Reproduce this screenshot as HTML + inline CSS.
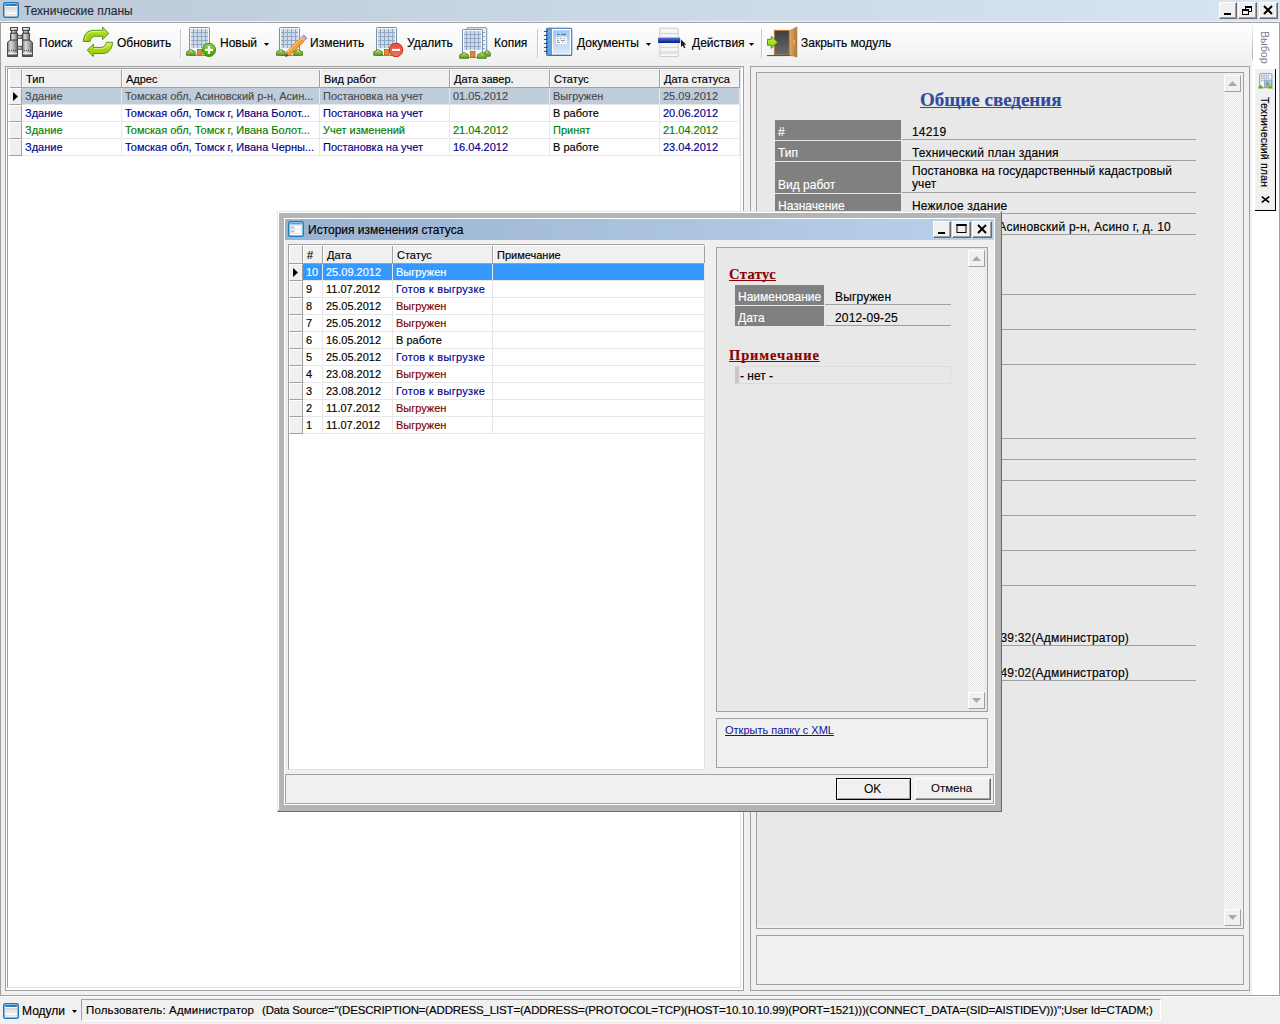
<!DOCTYPE html>
<html><head><meta charset="utf-8">
<style>
*{box-sizing:border-box;margin:0;padding:0}
html,body{width:1280px;height:1024px;overflow:hidden;background:#f0f0f0;font-family:"Liberation Sans",sans-serif;font-size:11px;color:#000}
.a{position:absolute}
.t{position:absolute;white-space:nowrap;line-height:1;-webkit-text-stroke-width:0.15px;text-decoration-skip-ink:none}
</style></head><body>
<div class="a" style="left:0px;top:0px;width:1280px;height:21px;background:linear-gradient(90deg,#bccad8,#cbd8e5 50%,#d7e5f2)"></div>
<div class="a" style="left:0px;top:21px;width:1280px;height:1px;background:#f0f0f0"></div>
<div class="a" style="left:0px;top:22px;width:1280px;height:1px;background:#a0a0a0"></div>
<div class="t" style="left:24px;top:5px;font-size:12px;color:#2a2a3a">Технические планы</div>
<svg class="a" style="left:3px;top:2px" width="16" height="16" viewBox="0 0 16 16">
<defs><linearGradient id="icg" x1="0" y1="0" x2="0" y2="1"><stop offset="0" stop-color="#d4d4d4"/><stop offset="1" stop-color="#f8f8f8"/></linearGradient></defs>
<rect x="0.75" y="0.75" width="14.5" height="14.5" rx="1.6" fill="#fff" stroke="#1878b8" stroke-width="1.5"/>
<rect x="2" y="2" width="12" height="2" fill="#2a8ad0"/><rect x="9" y="2.5" width="1" height="1" fill="#0a4a90"/><rect x="11" y="2.5" width="1" height="1" fill="#0a4a90"/><rect x="13" y="2.5" width="1" height="1" fill="#e03020"/>
<rect x="2" y="5" width="12" height="6.5" fill="url(#icg)"/>
<rect x="2" y="12.5" width="12" height="0.8" fill="#c8c8c8"/>
</svg>
<div class="a" style="left:1219px;top:2px;width:18px;height:17px;background:#f0f0f0;border-top:1px solid #fff;border-left:1px solid #fff;border-right:1px solid #6a6a6a;border-bottom:1px solid #6a6a6a;box-shadow:inset -1px -1px 0 #a0a0a0"></div>
<svg class="a" style="left:1219px;top:2px" width="18" height="17" viewBox="0 0 18 17"><rect x="5" y="11" width="7" height="2" fill="#000"/></svg>
<div class="a" style="left:1238px;top:2px;width:19px;height:17px;background:#f0f0f0;border-top:1px solid #fff;border-left:1px solid #fff;border-right:1px solid #6a6a6a;border-bottom:1px solid #6a6a6a;box-shadow:inset -1px -1px 0 #a0a0a0"></div>
<svg class="a" style="left:1238px;top:2px" width="19" height="17" viewBox="0 0 19 17"><rect x="7.5" y="4.5" width="6" height="5" fill="none" stroke="#000"/><rect x="7" y="4" width="7" height="2" fill="#000"/><rect x="4.5" y="7.5" width="6" height="5" fill="#f0f0f0" stroke="#000"/><rect x="4" y="7" width="7" height="2" fill="#000"/></svg>
<div class="a" style="left:1259px;top:2px;width:19px;height:17px;background:#f0f0f0;border-top:1px solid #fff;border-left:1px solid #fff;border-right:1px solid #6a6a6a;border-bottom:1px solid #6a6a6a;box-shadow:inset -1px -1px 0 #a0a0a0"></div>
<svg class="a" style="left:1259px;top:2px" width="19" height="17" viewBox="0 0 19 17"><path d="M5 4 L13 12 M13 4 L5 12" stroke="#000" stroke-width="2"/></svg>
<div class="a" style="left:0px;top:22px;width:1px;height:974px;background:#a0a0a0"></div>
<div class="a" style="left:1279px;top:22px;width:1px;height:974px;background:#a0a0a0"></div>
<div class="a" style="left:0px;top:995px;width:1280px;height:1px;background:#a0a0a0"></div>
<div class="a" style="left:0px;top:996px;width:1280px;height:1px;background:#fff"></div>
<div class="a" style="left:1px;top:23px;width:1251px;height:43px;background:linear-gradient(#fefefe,#f8f8f8 45%,#f0f0f0 95%)"></div>
<div class="a" style="left:1252px;top:23px;width:27px;height:972px;background:#fff"></div>
<div class="a" style="left:1252px;top:24px;width:1px;height:38px;background:linear-gradient(#f4f4f4,#b4b4b4 85%,#f0f0f0)"></div>
<svg class="a" style="left:4px;top:24px" width="32" height="36" viewBox="0 0 32 36">
<defs><linearGradient id="bg1" x1="0" x2="1"><stop offset="0" stop-color="#7a7a7a"/><stop offset="0.3" stop-color="#d8d8d8"/><stop offset="0.7" stop-color="#a4a4a4"/><stop offset="1" stop-color="#626262"/></linearGradient></defs>
<g fill="url(#bg1)" stroke="#4a4a4a" stroke-width="1">
<rect x="6.5" y="3.5" width="7" height="3"/><rect x="7.5" y="6.5" width="5" height="2.8"/><rect x="6.5" y="9.3" width="7" height="6.9"/>
<path d="M3.5 18.5L6 16.2H13.5V32.5H3.5Z"/>
<rect x="13.5" y="11.3" width="4.8" height="3"/><rect x="13.5" y="22.3" width="4.8" height="3"/>
<rect x="18.5" y="3.5" width="7" height="3"/><rect x="19.5" y="6.5" width="5" height="2.8"/><rect x="18.5" y="9.3" width="7" height="6.9"/>
<path d="M18.5 16.2H26L28.5 18.5V32.5H18.5Z"/>
</g>
<g fill="#555"><circle cx="5.4" cy="26.4" r="0.55"/><circle cx="7.5" cy="26.4" r="0.55"/><circle cx="9.5" cy="26.4" r="0.55"/><circle cx="11.5" cy="26.4" r="0.55"/>
<circle cx="20.4" cy="26.4" r="0.55"/><circle cx="22.5" cy="26.4" r="0.55"/><circle cx="24.5" cy="26.4" r="0.55"/><circle cx="26.6" cy="26.4" r="0.55"/></g>
<g fill="#f4f4f4"><rect x="4" y="28.8" width="9" height="1.3"/><rect x="19" y="28.8" width="9" height="1.3"/><rect x="7" y="4.3" width="6" height="1"/><rect x="19" y="4.3" width="6" height="1"/></g>
<g fill="#555"><rect x="4" y="30.6" width="9" height="1.6"/><rect x="19" y="30.6" width="9" height="1.6"/></g>
</svg>
<div class="t" style="left:39px;top:37px;font-size:12px;color:#000">Поиск</div>
<svg class="a" style="left:80px;top:24px" width="36" height="36" viewBox="0 0 36 36">
<defs><linearGradient id="gr1" x1="0" y1="0" x2="0" y2="1"><stop offset="0" stop-color="#d8f070"/><stop offset="0.5" stop-color="#a8d418"/><stop offset="1" stop-color="#98d000"/></linearGradient></defs>
<g fill="url(#gr1)" stroke="#3f9400" stroke-width="0.9" stroke-linejoin="round">
<path d="M3.3 17.5C3.8 10 8 6.3 13 6.3H22.6V3L28.8 9.4L22.6 15.6V12.3H15C12 12.3 10.6 14.5 10 17.5Z"/>
<path d="M32.6 18.3C32.1 25.8 28 29.5 23 29.5H13.4V32.6L7.2 26.2L13.4 20.1V23.4H21C24 23.4 25.6 21.3 26.4 18.3Z"/>
</g>
<g stroke="#eaffb0" stroke-width="0.8" fill="none" opacity="0.8"><path d="M5 16.5C5.5 11 9 7.6 13 7.6H22"/><path d="M14 24.6H21C24.5 24.6 26.5 22 27.2 19.4"/></g>
</svg>
<div class="t" style="left:117px;top:37px;font-size:12px;color:#000">Обновить</div>
<div class="a" style="left:180px;top:29px;width:1px;height:29px;background:#c8c8c8;box-shadow:1px 0 0 #fff"></div>
<svg width="0" height="0" style="position:absolute"><defs><linearGradient id="bushg" x1="0" y1="0" x2="0" y2="1"><stop offset="0" stop-color="#b8e070"/><stop offset="1" stop-color="#5e9a20"/></linearGradient><linearGradient id="grnc" x1="0" y1="0" x2="0" y2="1"><stop offset="0" stop-color="#8ad840"/><stop offset="1" stop-color="#3a9a00"/></linearGradient><linearGradient id="redc" x1="0" y1="0" x2="0" y2="1"><stop offset="0" stop-color="#e84a30"/><stop offset="1" stop-color="#f07060"/></linearGradient></defs></svg>
<svg class="a" style="left:184px;top:24px" width="36" height="36" viewBox="0 0 36 36"><rect x="5.5" y="3.5" width="20" height="28" rx="0.8" fill="#f2f7fc" stroke="#7890aa"/><rect x="7" y="5" width="17" height="19" fill="#cddcec"/><rect x="9" y="5" width="1" height="19" fill="#93a8c0"/><rect x="7" y="8" width="17" height="1" fill="#93a8c0"/><rect x="13" y="5" width="1" height="19" fill="#93a8c0"/><rect x="7" y="12" width="17" height="1" fill="#93a8c0"/><rect x="17" y="5" width="1" height="19" fill="#93a8c0"/><rect x="7" y="16" width="17" height="1" fill="#93a8c0"/><rect x="21" y="5" width="1" height="19" fill="#93a8c0"/><rect x="7" y="20" width="17" height="1" fill="#93a8c0"/><rect x="13.5" y="25.5" width="4.5" height="5.5" fill="#d89040" stroke="#c86a10" stroke-width="0.9"/><path transform="translate(2.1 25.1)" d="M0.5 6.2 V3.35 Q0.5 2.01 1.94 2.01 L2.716 2.01 Q3.201 0.4 4.85 0.4 Q6.499 0.4 6.983999999999999 2.01 L7.76 2.01 Q9.2 2.01 9.2 3.35 V6.2 Z" fill="url(#bushg)" stroke="#4a7c16" stroke-width="0.9"/><path transform="translate(2.1 25.1)" d="M3.88 1.34 Q4.85 0.67 5.819999999999999 1.34" stroke="#e0f4b0" stroke-width="0.8" fill="none"/><circle cx="25" cy="25.9" r="6.6" fill="url(#grnc)" stroke="#3a8a00" stroke-width="0.9"/><path d="M25 22V29.9M21.1 25.95H29" stroke="#fff" stroke-width="2.3"/></svg>
<div class="t" style="left:220px;top:37px;font-size:12px;color:#000">Новый</div>
<svg class="a" style="left:264px;top:43px" width="5" height="3" viewBox="0 0 5 3"><path d="M0 0H5L2.5 3Z" fill="#000"/></svg>
<svg class="a" style="left:272px;top:24px" width="36" height="36" viewBox="0 0 36 36"><rect x="7.5" y="3.5" width="20" height="28" rx="0.8" fill="#f2f7fc" stroke="#7890aa"/><rect x="9" y="5" width="17" height="19" fill="#cddcec"/><rect x="11" y="5" width="1" height="19" fill="#93a8c0"/><rect x="9" y="8" width="17" height="1" fill="#93a8c0"/><rect x="15" y="5" width="1" height="19" fill="#93a8c0"/><rect x="9" y="12" width="17" height="1" fill="#93a8c0"/><rect x="19" y="5" width="1" height="19" fill="#93a8c0"/><rect x="9" y="16" width="17" height="1" fill="#93a8c0"/><rect x="23" y="5" width="1" height="19" fill="#93a8c0"/><rect x="9" y="20" width="17" height="1" fill="#93a8c0"/><path transform="translate(4 25.1)" d="M0.5 6.2 V3.35 Q0.5 2.01 1.94 2.01 L2.716 2.01 Q3.201 0.4 4.85 0.4 Q6.499 0.4 6.983999999999999 2.01 L7.76 2.01 Q9.2 2.01 9.2 3.35 V6.2 Z" fill="url(#bushg)" stroke="#4a7c16" stroke-width="0.9"/><path transform="translate(4 25.1)" d="M3.88 1.34 Q4.85 0.67 5.819999999999999 1.34" stroke="#e0f4b0" stroke-width="0.8" fill="none"/><path transform="translate(21.3 25.1)" d="M0.5 6.2 V3.35 Q0.5 2.01 1.94 2.01 L2.716 2.01 Q3.201 0.4 4.85 0.4 Q6.499 0.4 6.983999999999999 2.01 L7.76 2.01 Q9.2 2.01 9.2 3.35 V6.2 Z" fill="url(#bushg)" stroke="#4a7c16" stroke-width="0.9"/><path transform="translate(21.3 25.1)" d="M3.88 1.34 Q4.85 0.67 5.819999999999999 1.34" stroke="#e0f4b0" stroke-width="0.8" fill="none"/><path d="M13.6 32.6 L15 27.5 L30 12.5 L33.4 15.9 L18.4 30.9 Z" fill="#f5a030" stroke="#b86a10" stroke-width="0.8"/><path d="M15.5 28 L30.5 13" stroke="#ffe0a0" stroke-width="1"/><path d="M30 12.5 L31.8 10.8 L35 14.2 L33.4 15.9Z" fill="#e890d0" stroke="#b060a0" stroke-width="0.6"/><path d="M28.6 13.9 L30 12.5 L33.4 15.9 L32 17.3Z" fill="#c8c8c8"/><path d="M13.6 32.6 L14.4 29.6 L16.6 31.8Z" fill="#404040"/></svg>
<div class="t" style="left:310px;top:37px;font-size:12px;color:#000">Изменить</div>
<svg class="a" style="left:370px;top:24px" width="36" height="36" viewBox="0 0 36 36"><rect x="6.5" y="3.5" width="20" height="28" rx="0.8" fill="#f2f7fc" stroke="#7890aa"/><rect x="8" y="5" width="17" height="19" fill="#cddcec"/><rect x="10" y="5" width="1" height="19" fill="#93a8c0"/><rect x="8" y="8" width="17" height="1" fill="#93a8c0"/><rect x="14" y="5" width="1" height="19" fill="#93a8c0"/><rect x="8" y="12" width="17" height="1" fill="#93a8c0"/><rect x="18" y="5" width="1" height="19" fill="#93a8c0"/><rect x="8" y="16" width="17" height="1" fill="#93a8c0"/><rect x="22" y="5" width="1" height="19" fill="#93a8c0"/><rect x="8" y="20" width="17" height="1" fill="#93a8c0"/><rect x="14.5" y="25.5" width="4.5" height="5.5" fill="#d89040" stroke="#c86a10" stroke-width="0.9"/><path transform="translate(3.2 25.1)" d="M0.5 6.2 V3.35 Q0.5 2.01 1.94 2.01 L2.716 2.01 Q3.201 0.4 4.85 0.4 Q6.499 0.4 6.983999999999999 2.01 L7.76 2.01 Q9.2 2.01 9.2 3.35 V6.2 Z" fill="url(#bushg)" stroke="#4a7c16" stroke-width="0.9"/><path transform="translate(3.2 25.1)" d="M3.88 1.34 Q4.85 0.67 5.819999999999999 1.34" stroke="#e0f4b0" stroke-width="0.8" fill="none"/><circle cx="26" cy="25.9" r="6.8" fill="url(#redc)" stroke="#c02a10" stroke-width="0.9"/><rect x="22" y="24.9" width="8" height="2.1" fill="#fff"/></svg>
<div class="t" style="left:407px;top:37px;font-size:12px;color:#000">Удалить</div>
<svg class="a" style="left:456px;top:24px" width="36" height="36" viewBox="0 0 36 36"><rect x="10.7" y="3.7" width="20" height="28" rx="0.8" fill="#e8f0f8" stroke="#7890aa"/><g fill="#93a8c0"><rect x="27" y="8" width="2" height="1"/><rect x="27" y="12" width="2" height="1"/><rect x="27" y="16" width="2" height="1"/><rect x="27" y="20" width="2" height="1"/><rect x="27" y="24" width="2" height="1"/></g><rect x="6.5" y="5.5" width="20" height="28" rx="0.8" fill="#f2f7fc" stroke="#7890aa"/><rect x="8" y="7" width="17" height="19" fill="#cddcec"/><rect x="10" y="7" width="1" height="19" fill="#93a8c0"/><rect x="8" y="10" width="17" height="1" fill="#93a8c0"/><rect x="14" y="7" width="1" height="19" fill="#93a8c0"/><rect x="8" y="14" width="17" height="1" fill="#93a8c0"/><rect x="18" y="7" width="1" height="19" fill="#93a8c0"/><rect x="8" y="18" width="17" height="1" fill="#93a8c0"/><rect x="22" y="7" width="1" height="19" fill="#93a8c0"/><rect x="8" y="22" width="17" height="1" fill="#93a8c0"/><rect x="14.5" y="27.5" width="4.5" height="5.5" fill="#d89040" stroke="#c86a10" stroke-width="0.9"/><path transform="translate(27.4 26)" d="M0.5 6.2 V3.35 Q0.5 2.01 1.4800000000000002 2.01 L2.0720000000000005 2.01 Q2.442 0.4 3.7 0.4 Q4.958 0.4 5.328 2.01 L5.920000000000001 2.01 Q6.9 2.01 6.9 3.35 V6.2 Z" fill="url(#bushg)" stroke="#4a7c16" stroke-width="0.9"/><path transform="translate(27.4 26)" d="M2.9600000000000004 1.34 Q3.7 0.67 4.44 1.34" stroke="#e0f4b0" stroke-width="0.8" fill="none"/><path transform="translate(3.2 28.1)" d="M0.5 6.2 V3.35 Q0.5 2.01 1.94 2.01 L2.716 2.01 Q3.201 0.4 4.85 0.4 Q6.499 0.4 6.983999999999999 2.01 L7.76 2.01 Q9.2 2.01 9.2 3.35 V6.2 Z" fill="url(#bushg)" stroke="#4a7c16" stroke-width="0.9"/><path transform="translate(3.2 28.1)" d="M3.88 1.34 Q4.85 0.67 5.819999999999999 1.34" stroke="#e0f4b0" stroke-width="0.8" fill="none"/><path transform="translate(21 28.1)" d="M0.5 6.2 V3.35 Q0.5 2.01 1.94 2.01 L2.716 2.01 Q3.201 0.4 4.85 0.4 Q6.499 0.4 6.983999999999999 2.01 L7.76 2.01 Q9.2 2.01 9.2 3.35 V6.2 Z" fill="url(#bushg)" stroke="#4a7c16" stroke-width="0.9"/><path transform="translate(21 28.1)" d="M3.88 1.34 Q4.85 0.67 5.819999999999999 1.34" stroke="#e0f4b0" stroke-width="0.8" fill="none"/></svg>
<div class="t" style="left:494px;top:37px;font-size:12px;color:#000">Копия</div>
<div class="a" style="left:537px;top:29px;width:1px;height:29px;background:#c8c8c8;box-shadow:1px 0 0 #fff"></div>
<svg class="a" style="left:540px;top:24px" width="36" height="36" viewBox="0 0 36 36">
<defs><linearGradient id="pgb" x1="0" y1="0" x2="0" y2="1"><stop offset="0" stop-color="#a6c6ea"/><stop offset="1" stop-color="#dae9f8"/></linearGradient></defs>
<rect x="6.5" y="4.2" width="25.3" height="27.3" rx="0.8" fill="#4a86c0" stroke="#3a72b0"/>
<rect x="7.5" y="5" width="3.6" height="26" fill="#5a9ad0"/>
<g stroke="#9ad0f8" stroke-width="0.8"><path d="M8 8.5L10 7.4M8 12.5L10 11.4M8 16.5L10 15.4M8 20.5L10 19.4M8 24.5L10 23.4M8 28.5L10 27.4"/></g>
<rect x="11.8" y="4.9" width="19.3" height="25.7" fill="#fff"/>
<rect x="13" y="6.2" width="16.9" height="23.5" fill="url(#pgb)"/>
<rect x="16" y="13" width="10.9" height="6.9" rx="0.8" fill="#fff"/>
<g stroke="#5a5a5a" stroke-width="0.7"><path d="M17 14.4H18.3M20 14.4H21.6M23.8 14.4H25.2M17 16.4H19M21 16.4H25.2M17 18.3H19.8M22 18.3H23.2M25 18.3H25.5"/></g>
<g stroke="#2a6ab0" stroke-width="0.9"><path d="M17 10.4H19.6M21 10.4H26"/></g>
<g stroke="#5a4030" stroke-width="1"><path d="M3.9 7.4H7.9M3.9 11.4H7.9M3.9 15.5H7.9M3.9 19.5H7.9M3.9 23.4H7.9M3.9 27.4H7.9"/></g>
</svg>
<div class="t" style="left:577px;top:37px;font-size:12px;color:#000">Документы</div>
<svg class="a" style="left:646px;top:43px" width="5" height="3" viewBox="0 0 5 3"><path d="M0 0H5L2.5 3Z" fill="#000"/></svg>
<svg class="a" style="left:654px;top:24px" width="36" height="36" viewBox="0 0 36 36">
<defs><linearGradient id="actb" x1="0" y1="0" x2="0" y2="1"><stop offset="0" stop-color="#5a7ad8"/><stop offset="1" stop-color="#001a88"/></linearGradient></defs>
<rect x="5.8" y="4.2" width="18.4" height="28.3" rx="0.6" fill="#f6f6f6" stroke="#c4c4c4" stroke-width="0.8"/>
<g stroke="#c8c8c8" stroke-width="0.8"><path d="M6 9.5H24M6 23.4H24"/></g>
<rect x="6" y="27" width="18" height="3" fill="#e2e2e2"/>
<rect x="4" y="13.5" width="22.2" height="5.5" rx="0.8" fill="url(#actb)"/>
<path d="M27 15.6V23L28.6 21.4L30.2 24.2L31.4 23.5L29.9 20.8H32.2Z" fill="#1a1a1a"/>
</svg>
<div class="t" style="left:692px;top:37px;font-size:12px;color:#000">Действия</div>
<svg class="a" style="left:749px;top:43px" width="5" height="3" viewBox="0 0 5 3"><path d="M0 0H5L2.5 3Z" fill="#000"/></svg>
<div class="a" style="left:761px;top:29px;width:1px;height:29px;background:#c8c8c8;box-shadow:1px 0 0 #fff"></div>
<svg class="a" style="left:762px;top:22px" width="38" height="38" viewBox="0 0 38 38">
<defs><linearGradient id="dr" x1="0" y1="0" x2="0" y2="1"><stop offset="0" stop-color="#3e3e3e"/><stop offset="1" stop-color="#6a6a6a"/></linearGradient>
<linearGradient id="leaf" x1="0" x2="1"><stop offset="0" stop-color="#e0aa68"/><stop offset="1" stop-color="#b07a38"/></linearGradient>
<linearGradient id="garr" x1="0" y1="0" x2="0" y2="1"><stop offset="0" stop-color="#c8f060"/><stop offset="1" stop-color="#88cc00"/></linearGradient></defs>
<rect x="12.3" y="8.3" width="15" height="24.7" fill="url(#dr)" stroke="#c08040" stroke-width="0.9"/>
<path d="M27.3 8.9L34.9 5V34.9L27.3 33Z" fill="url(#leaf)" stroke="#a06a28" stroke-width="0.6"/>
<rect x="31.2" y="18" width="1.6" height="4.6" fill="#f0b820"/>
<rect x="5" y="33" width="23.2" height="1.1" fill="#555"/>
<path d="M5.5 17.3H9.3V14.3L15.6 20.3L9.3 26.3V23.3H5.5Z" fill="url(#garr)" stroke="#3a9000" stroke-width="0.9" stroke-linejoin="round"/>
</svg>
<div class="t" style="left:801px;top:37px;font-size:12px;color:#000">Закрыть модуль</div>
<div class="a" style="left:5px;top:66px;width:739px;height:925px;border:1px solid #a0a0a0;background:#fff"></div>
<div class="a" style="left:6px;top:67px;width:737px;height:923px;border:1px solid #fff;border-top-color:#e6e6e6"></div>
<div class="a" style="left:7px;top:68px;width:734px;height:920px;border-left:1px solid #a0a0a0;border-top:1px solid #a0a0a0;border-right:1px solid #e3e3e3;border-bottom:1px solid #e3e3e3;background:#fff"></div>
<div class="a" style="left:8px;top:69px;width:732px;height:19px;background:#f0f0f0;border-top:1px solid #fff;border-bottom:1px solid #a0a0a0;box-shadow:inset 0 1px 0 #e6e6e6"></div>
<div class="a" style="left:8px;top:69px;width:2px;height:19px;background:#fff"></div>
<div class="a" style="left:21px;top:70px;width:1px;height:17px;background:#a0a0a0"></div>
<div class="a" style="left:22px;top:70px;width:1px;height:17px;background:#fff"></div>
<div class="a" style="left:121px;top:70px;width:1px;height:17px;background:#a0a0a0"></div>
<div class="a" style="left:122px;top:70px;width:1px;height:17px;background:#fff"></div>
<div class="a" style="left:319px;top:70px;width:1px;height:17px;background:#a0a0a0"></div>
<div class="a" style="left:320px;top:70px;width:1px;height:17px;background:#fff"></div>
<div class="a" style="left:449px;top:70px;width:1px;height:17px;background:#a0a0a0"></div>
<div class="a" style="left:450px;top:70px;width:1px;height:17px;background:#fff"></div>
<div class="a" style="left:549px;top:70px;width:1px;height:17px;background:#a0a0a0"></div>
<div class="a" style="left:550px;top:70px;width:1px;height:17px;background:#fff"></div>
<div class="a" style="left:659px;top:70px;width:1px;height:17px;background:#a0a0a0"></div>
<div class="a" style="left:660px;top:70px;width:1px;height:17px;background:#fff"></div>
<div class="a" style="left:739px;top:70px;width:1px;height:17px;background:#a0a0a0"></div>
<div class="t" style="left:26px;top:74px;font-size:11px;color:#000">Тип</div>
<div class="t" style="left:126px;top:74px;font-size:11px;color:#000">Адрес</div>
<div class="t" style="left:324px;top:74px;font-size:11px;color:#000">Вид работ</div>
<div class="t" style="left:454px;top:74px;font-size:11px;color:#000">Дата завер.</div>
<div class="t" style="left:554px;top:74px;font-size:11px;color:#000">Статус</div>
<div class="t" style="left:664px;top:74px;font-size:11px;color:#000">Дата статуса</div>
<div class="a" style="left:8px;top:88px;width:14px;height:17px;background:#f0f0f0;border-top:1px solid #fff;border-left:2px solid #fff;border-bottom:1px solid #a0a0a0;border-right:1px solid #a0a0a0"></div>
<div class="a" style="left:22px;top:88px;width:718px;height:16px;background:#bfcddb"></div>
<svg class="a" style="left:13px;top:92px" width="5" height="9" viewBox="0 0 5 9"><path d="M0 0L5 4.5L0 9Z" fill="#000"/></svg>
<div class="a" style="left:22px;top:104px;width:718px;height:1px;background:#e8e8e8"></div>
<div class="a" style="left:121px;top:88px;width:1px;height:17px;background:#e8e8e8"></div>
<div class="a" style="left:319px;top:88px;width:1px;height:17px;background:#e8e8e8"></div>
<div class="a" style="left:449px;top:88px;width:1px;height:17px;background:#e8e8e8"></div>
<div class="a" style="left:549px;top:88px;width:1px;height:17px;background:#e8e8e8"></div>
<div class="a" style="left:659px;top:88px;width:1px;height:17px;background:#e8e8e8"></div>
<div class="a" style="left:739px;top:88px;width:1px;height:17px;background:#e8e8e8"></div>
<div class="t" style="left:25px;top:91px;font-size:11px;color:#4a4a4a">Здание</div>
<div class="t" style="left:125px;top:91px;font-size:11px;color:#4a4a4a">Томская обл, Асиновский р-н, Асин...</div>
<div class="t" style="left:323px;top:91px;font-size:11px;color:#4a4a4a">Постановка на учет</div>
<div class="t" style="left:453px;top:91px;font-size:11px;color:#4a4a4a">01.05.2012</div>
<div class="t" style="left:553px;top:91px;font-size:11px;color:#4a4a4a">Выгружен</div>
<div class="t" style="left:663px;top:91px;font-size:11px;color:#4a4a4a">25.09.2012</div>
<div class="a" style="left:8px;top:105px;width:14px;height:17px;background:#f0f0f0;border-top:1px solid #fff;border-left:2px solid #fff;border-bottom:1px solid #a0a0a0;border-right:1px solid #a0a0a0"></div>
<div class="a" style="left:22px;top:121px;width:718px;height:1px;background:#e8e8e8"></div>
<div class="a" style="left:121px;top:105px;width:1px;height:17px;background:#e8e8e8"></div>
<div class="a" style="left:319px;top:105px;width:1px;height:17px;background:#e8e8e8"></div>
<div class="a" style="left:449px;top:105px;width:1px;height:17px;background:#e8e8e8"></div>
<div class="a" style="left:549px;top:105px;width:1px;height:17px;background:#e8e8e8"></div>
<div class="a" style="left:659px;top:105px;width:1px;height:17px;background:#e8e8e8"></div>
<div class="a" style="left:739px;top:105px;width:1px;height:17px;background:#e8e8e8"></div>
<div class="t" style="left:25px;top:108px;font-size:11px;color:#00008c">Здание</div>
<div class="t" style="left:125px;top:108px;font-size:11px;color:#00008c">Томская обл, Томск г, Ивана Болот...</div>
<div class="t" style="left:323px;top:108px;font-size:11px;color:#00008c">Постановка на учет</div>
<div class="t" style="left:453px;top:108px;font-size:11px;color:#00008c"></div>
<div class="t" style="left:553px;top:108px;font-size:11px;color:#000">В работе</div>
<div class="t" style="left:663px;top:108px;font-size:11px;color:#00008c">20.06.2012</div>
<div class="a" style="left:8px;top:122px;width:14px;height:17px;background:#f0f0f0;border-top:1px solid #fff;border-left:2px solid #fff;border-bottom:1px solid #a0a0a0;border-right:1px solid #a0a0a0"></div>
<div class="a" style="left:22px;top:138px;width:718px;height:1px;background:#e8e8e8"></div>
<div class="a" style="left:121px;top:122px;width:1px;height:17px;background:#e8e8e8"></div>
<div class="a" style="left:319px;top:122px;width:1px;height:17px;background:#e8e8e8"></div>
<div class="a" style="left:449px;top:122px;width:1px;height:17px;background:#e8e8e8"></div>
<div class="a" style="left:549px;top:122px;width:1px;height:17px;background:#e8e8e8"></div>
<div class="a" style="left:659px;top:122px;width:1px;height:17px;background:#e8e8e8"></div>
<div class="a" style="left:739px;top:122px;width:1px;height:17px;background:#e8e8e8"></div>
<div class="t" style="left:25px;top:125px;font-size:11px;color:#008000">Здание</div>
<div class="t" style="left:125px;top:125px;font-size:11px;color:#008000">Томская обл, Томск г, Ивана Болот...</div>
<div class="t" style="left:323px;top:125px;font-size:11px;color:#008000">Учет изменений</div>
<div class="t" style="left:453px;top:125px;font-size:11px;color:#008000">21.04.2012</div>
<div class="t" style="left:553px;top:125px;font-size:11px;color:#008000">Принят</div>
<div class="t" style="left:663px;top:125px;font-size:11px;color:#008000">21.04.2012</div>
<div class="a" style="left:8px;top:139px;width:14px;height:17px;background:#f0f0f0;border-top:1px solid #fff;border-left:2px solid #fff;border-bottom:1px solid #a0a0a0;border-right:1px solid #a0a0a0"></div>
<div class="a" style="left:22px;top:155px;width:718px;height:1px;background:#e8e8e8"></div>
<div class="a" style="left:121px;top:139px;width:1px;height:17px;background:#e8e8e8"></div>
<div class="a" style="left:319px;top:139px;width:1px;height:17px;background:#e8e8e8"></div>
<div class="a" style="left:449px;top:139px;width:1px;height:17px;background:#e8e8e8"></div>
<div class="a" style="left:549px;top:139px;width:1px;height:17px;background:#e8e8e8"></div>
<div class="a" style="left:659px;top:139px;width:1px;height:17px;background:#e8e8e8"></div>
<div class="a" style="left:739px;top:139px;width:1px;height:17px;background:#e8e8e8"></div>
<div class="t" style="left:25px;top:142px;font-size:11px;color:#00008c">Здание</div>
<div class="t" style="left:125px;top:142px;font-size:11px;color:#00008c">Томская обл, Томск г, Ивана Черны...</div>
<div class="t" style="left:323px;top:142px;font-size:11px;color:#00008c">Постановка на учет</div>
<div class="t" style="left:453px;top:142px;font-size:11px;color:#00008c">16.04.2012</div>
<div class="t" style="left:553px;top:142px;font-size:11px;color:#000">В работе</div>
<div class="t" style="left:663px;top:142px;font-size:11px;color:#00008c">23.04.2012</div>
<div class="a" style="left:750px;top:66px;width:500px;height:925px;border:1px solid #a0a0a0;background:#f0f0f0"></div>
<div class="a" style="left:756px;top:72px;width:488px;height:857px;border:1px solid #a0a0a0;background:#f0f0f0"></div>
<div class="a" style="left:757px;top:73px;width:467px;height:853px;background:#e8e8e8"></div>
<div class="a" style="left:1224px;top:92px;width:17px;height:817px;background-color:#f4f4f4;background-image:repeating-conic-gradient(#e6e6e6 0 25%,#fafafa 0 50%);background-size:2px 2px"></div>
<div class="a" style="left:1224px;top:75px;width:17px;height:17px;background:#f0f0f0;border-top:1px solid #fff;border-left:1px solid #fff;border-right:1px solid #a0a0a0;border-bottom:1px solid #a0a0a0"></div>
<svg class="a" style="left:1228px;top:81px" width="9" height="5" viewBox="0 0 9 5"><path d="M0 5L4.5 0L9 5Z" fill="#a8a8a8"/></svg>
<div class="a" style="left:1224px;top:909px;width:17px;height:17px;background:#f0f0f0;border-top:1px solid #fff;border-left:1px solid #fff;border-right:1px solid #a0a0a0;border-bottom:1px solid #a0a0a0"></div>
<svg class="a" style="left:1228px;top:915px" width="9" height="5" viewBox="0 0 9 5"><path d="M0 0L9 0L4.5 5Z" fill="#a8a8a8"/></svg>
<div class="a" style="left:756px;top:935px;width:488px;height:50px;border:1px solid #a0a0a0;background:#f0f0f0"></div>
<div class="t" style="left:920px;top:90px;font-size:19px;font-weight:bold;color:#2d4a9e;text-decoration:underline;font-family:Liberation Serif,serif">Общие сведения</div>
<div class="a" style="left:775px;top:120px;width:126px;height:20px;background:#808080"></div>
<div class="t" style="left:778px;top:126px;font-size:12px;color:#fff">#</div>
<div class="a" style="left:902px;top:139px;width:294px;height:1px;background:#a0a0a0"></div>
<div class="t" style="left:912px;top:126px;font-size:12px;letter-spacing:0.2px">14219</div>
<div class="a" style="left:775px;top:141px;width:126px;height:20px;background:#808080"></div>
<div class="t" style="left:778px;top:147px;font-size:12px;color:#fff">Тип</div>
<div class="a" style="left:902px;top:160px;width:294px;height:1px;background:#a0a0a0"></div>
<div class="t" style="left:912px;top:147px;font-size:12px;letter-spacing:0.2px">Технический план здания</div>
<div class="a" style="left:775px;top:162px;width:126px;height:31px;background:#808080"></div>
<div class="t" style="left:778px;top:179px;font-size:12px;color:#fff">Вид работ</div>
<div class="a" style="left:902px;top:192px;width:294px;height:1px;background:#a0a0a0"></div>
<div class="t" style="left:912px;top:165px;font-size:12px;line-height:13px;letter-spacing:0.08px">Постановка на государственный кадастровый<br>учет</div>
<div class="a" style="left:775px;top:194px;width:126px;height:20px;background:#808080"></div>
<div class="t" style="left:778px;top:200px;font-size:12px;color:#fff">Назначение</div>
<div class="a" style="left:902px;top:213px;width:294px;height:1px;background:#a0a0a0"></div>
<div class="t" style="left:912px;top:200px;font-size:12px;letter-spacing:0.2px">Нежилое здание</div>
<div class="a" style="left:775px;top:215px;width:126px;height:20px;background:#808080"></div>
<div class="t" style="left:778px;top:221px;font-size:12px;color:#fff">Адрес</div>
<div class="a" style="left:902px;top:234px;width:294px;height:1px;background:#a0a0a0"></div>
<div class="t" style="left:912px;top:221px;font-size:12px;letter-spacing:0.2px"></div>
<div class="a" style="left:775px;top:294px;width:421px;height:1px;background:#a0a0a0"></div>
<div class="a" style="left:775px;top:329px;width:421px;height:1px;background:#a0a0a0"></div>
<div class="a" style="left:775px;top:364px;width:421px;height:1px;background:#a0a0a0"></div>
<div class="a" style="left:775px;top:438px;width:421px;height:1px;background:#a0a0a0"></div>
<div class="a" style="left:775px;top:459px;width:421px;height:1px;background:#a0a0a0"></div>
<div class="a" style="left:775px;top:480px;width:421px;height:1px;background:#a0a0a0"></div>
<div class="a" style="left:775px;top:515px;width:421px;height:1px;background:#a0a0a0"></div>
<div class="a" style="left:775px;top:550px;width:421px;height:1px;background:#a0a0a0"></div>
<div class="a" style="left:775px;top:585px;width:421px;height:1px;background:#a0a0a0"></div>
<div class="a" style="left:775px;top:645px;width:421px;height:1px;background:#a0a0a0"></div>
<div class="a" style="left:775px;top:680px;width:421px;height:1px;background:#a0a0a0"></div>
<div class="t" style="left:700px;top:632px;font-size:12px;width:429px;text-align:right;letter-spacing:0.2px">25.09.2012 14:39:32(Администратор)</div>
<div class="t" style="left:700px;top:667px;font-size:12px;width:429px;text-align:right;letter-spacing:0.2px">25.09.2012 14:49:02(Администратор)</div>
<div class="t" style="left:700px;top:221px;font-size:12px;width:471px;text-align:right;letter-spacing:0.22px">Томская обл, Асиновский р-н, Асино г, д. 10</div>
<svg class="a" style="left:3px;top:1003px" width="16" height="16" viewBox="0 0 16 16">
<rect x="0.75" y="0.75" width="14.5" height="14.5" rx="1.6" fill="#fff" stroke="#1878b8" stroke-width="1.5"/>
<rect x="2" y="2" width="12" height="2" fill="#2a8ad0"/><rect x="9" y="2.5" width="1" height="1" fill="#0a4a90"/><rect x="11" y="2.5" width="1" height="1" fill="#0a4a90"/><rect x="13" y="2.5" width="1" height="1" fill="#e03020"/>
<rect x="2" y="5" width="12" height="6.5" fill="url(#icg)"/>
<rect x="2" y="12.5" width="12" height="0.8" fill="#c8c8c8"/>
</svg>
<div class="t" style="left:22px;top:1005px;font-size:12px">Модули</div>
<svg class="a" style="left:72px;top:1010px" width="5" height="3" viewBox="0 0 5 3"><path d="M0 0H5L2.5 3Z" fill="#000"/></svg>
<div class="a" style="left:81px;top:999px;width:1080px;height:22px;border-left:1px solid #a0a0a0;border-top:1px solid #a0a0a0;border-right:1px solid #fff;border-bottom:1px solid #fff"></div>
<div class="t" style="left:86px;top:1005px;font-size:11.5px;letter-spacing:0.15px">Пользователь: Администратор</div>
<div class="t" style="left:262px;top:1005px;font-size:11.5px;letter-spacing:-0.16px">(Data Source="(DESCRIPTION=(ADDRESS_LIST=(ADDRESS=(PROTOCOL=TCP)(HOST=10.10.10.99)(PORT=1521)))(CONNECT_DATA=(SID=AISTIDEV)))";User Id=CTADM;)</div>
<div class="t" style="left:1259px;top:31px;font-size:10.6px;color:#7a7a8a;writing-mode:vertical-rl;-webkit-text-stroke-width:0">Выбор</div>
<div class="a" style="left:1255px;top:69px;width:21px;height:142px;background:#f0f0f0;border-right:1px solid #000;border-bottom:1px solid #000"></div>
<svg class="a" style="left:1257px;top:72px" width="18" height="18" viewBox="0 0 18 18">
<rect x="2.7" y="1.7" width="12.2" height="14" rx="1" fill="#f4f8fc" stroke="#7a9ac0"/>
<g fill="#a0b4cc"><rect x="4" y="3" width="1.6" height="1.6"/><rect x="6.2" y="3" width="1.6" height="1.6"/><rect x="8.4" y="3" width="1.6" height="1.6"/><rect x="10.6" y="3" width="1.6" height="1.6"/>
<rect x="4" y="5.3" width="1.6" height="1.6"/><rect x="6.2" y="5.3" width="1.6" height="1.6"/><rect x="8.4" y="5.3" width="1.6" height="1.6"/><rect x="10.6" y="5.3" width="1.6" height="1.6"/>
<rect x="4" y="7.6" width="1.6" height="1.6"/><rect x="6.2" y="7.6" width="1.6" height="1.6"/></g>
<rect x="7.3" y="8" width="7.2" height="7.2" fill="#9ccaf0" stroke="#6a9ac8" stroke-width="0.6"/>
<path d="M8.5 14.6L10 8.8L13.8 14.6Z" fill="#8ac040"/><path d="M10 8.8L11.2 13L8.8 13Z" fill="#e07030"/>
<path d="M1 16.6Q1.5 13.2 3.5 13.2Q5.5 13.2 6 16.6Z" fill="#6aa820"/><path d="M11 16.6Q11.5 14 13.5 14Q15.5 14 16 16.6Z" fill="#6aa820"/>
</svg>
<div class="t" style="left:1259px;top:97px;font-size:10.7px;letter-spacing:0.05px;color:#000;writing-mode:vertical-rl">Технический план</div>
<svg class="a" style="left:1261px;top:196px" width="9" height="7" viewBox="0 0 9 7"><path d="M0.8 0.6L8.2 6.4M8.2 0.6L0.8 6.4" stroke="#000" stroke-width="1.6"/></svg>
<div class="a" style="left:277px;top:211px;width:725px;height:601px;background:#b4b4b4;border-left:1px solid #e6e6e6;border-top:1px solid #e6e6e6;border-right:1px solid #6a6a6a;border-bottom:1px solid #6a6a6a"></div>
<div class="a" style="left:278px;top:212px;width:1px;height:598px;background:#fff"></div>
<div class="a" style="left:278px;top:212px;width:722px;height:1px;background:#fff"></div>
<div class="a" style="left:284px;top:218px;width:711px;height:587px;background:#f0f0f0;border:1px solid #fff"></div>
<div class="a" style="left:285px;top:219px;width:709px;height:21px;background:linear-gradient(90deg,#9ab3d2,#b9d1ea)"></div>
<svg class="a" style="left:288px;top:221px" width="16" height="16" viewBox="0 0 16 16">
<rect x="0.75" y="0.75" width="14.5" height="14.5" rx="1.5" fill="#fff" stroke="#1a7dc0" stroke-width="1.5"/>
<rect x="2" y="2" width="12" height="1.5" fill="#5aa0d8"/>
<rect x="2" y="4" width="12" height="9" fill="#e8e8e8"/>
<g fill="#fff"><rect x="7" y="5" width="6" height="3"/><rect x="7" y="9" width="6" height="3"/></g>
<g fill="#b0b0b0"><rect x="3" y="6" width="3" height="1"/><rect x="3" y="10" width="3" height="1"/></g>
</svg>
<div class="t" style="left:308px;top:224px;font-size:12px;color:#000">История изменения статуса</div>
<div class="a" style="left:933px;top:221px;width:18px;height:17px;background:#f0f0f0;border-top:1px solid #fff;border-left:1px solid #fff;border-right:1px solid #6a6a6a;border-bottom:1px solid #6a6a6a;box-shadow:inset -1px -1px 0 #a0a0a0"></div>
<svg class="a" style="left:933px;top:221px" width="18" height="17" viewBox="0 0 18 17"><rect x="5" y="11" width="7" height="2" fill="#000"/></svg>
<div class="a" style="left:952px;top:221px;width:19px;height:17px;background:#f0f0f0;border-top:1px solid #fff;border-left:1px solid #fff;border-right:1px solid #6a6a6a;border-bottom:1px solid #6a6a6a;box-shadow:inset -1px -1px 0 #a0a0a0"></div>
<svg class="a" style="left:952px;top:221px" width="19" height="17" viewBox="0 0 19 17"><rect x="5" y="3.5" width="9" height="8" fill="none" stroke="#000"/><rect x="4.5" y="3" width="10" height="2" fill="#000"/></svg>
<div class="a" style="left:972px;top:221px;width:20px;height:17px;background:#f0f0f0;border-top:1px solid #fff;border-left:1px solid #fff;border-right:1px solid #6a6a6a;border-bottom:1px solid #6a6a6a;box-shadow:inset -1px -1px 0 #a0a0a0"></div>
<svg class="a" style="left:972px;top:221px" width="20" height="17" viewBox="0 0 20 17"><path d="M6 4 L14 12 M14 4 L6 12" stroke="#000" stroke-width="2"/></svg>
<div class="a" style="left:288px;top:244px;width:417px;height:526px;background:#fff;border-left:1px solid #a0a0a0;border-top:1px solid #a0a0a0;border-right:1px solid #e3e3e3;border-bottom:1px solid #e3e3e3"></div>
<div class="a" style="left:289px;top:245px;width:415px;height:19px;background:#f0f0f0;border-top:1px solid #fff;border-bottom:1px solid #a0a0a0"></div>
<div class="a" style="left:289px;top:245px;width:1px;height:18px;background:#fff"></div>
<div class="a" style="left:302px;top:246px;width:1px;height:17px;background:#a0a0a0"></div>
<div class="a" style="left:303px;top:246px;width:1px;height:17px;background:#fff"></div>
<div class="a" style="left:322px;top:246px;width:1px;height:17px;background:#a0a0a0"></div>
<div class="a" style="left:323px;top:246px;width:1px;height:17px;background:#fff"></div>
<div class="a" style="left:392px;top:246px;width:1px;height:17px;background:#a0a0a0"></div>
<div class="a" style="left:393px;top:246px;width:1px;height:17px;background:#fff"></div>
<div class="a" style="left:492px;top:246px;width:1px;height:17px;background:#a0a0a0"></div>
<div class="a" style="left:493px;top:246px;width:1px;height:17px;background:#fff"></div>
<div class="a" style="left:704px;top:246px;width:1px;height:17px;background:#a0a0a0"></div>
<div class="t" style="left:307px;top:250px;font-size:11px">#</div>
<div class="t" style="left:327px;top:250px;font-size:11px">Дата</div>
<div class="t" style="left:397px;top:250px;font-size:11px">Статус</div>
<div class="t" style="left:497px;top:250px;font-size:11px">Примечание</div>
<div class="a" style="left:289px;top:264px;width:14px;height:17px;background:#f0f0f0;border-top:1px solid #fff;border-left:1px solid #fff;border-bottom:1px solid #a0a0a0;border-right:1px solid #a0a0a0"></div>
<div class="a" style="left:303px;top:264px;width:401px;height:16px;background:#3399ff"></div>
<svg class="a" style="left:293px;top:268px" width="5" height="9" viewBox="0 0 5 9"><path d="M0 0L5 4.5L0 9Z" fill="#000"/></svg>
<div class="a" style="left:303px;top:280px;width:401px;height:1px;background:#e8e8e8"></div>
<div class="a" style="left:322px;top:264px;width:1px;height:17px;background:#e8e8e8"></div>
<div class="a" style="left:392px;top:264px;width:1px;height:17px;background:#e8e8e8"></div>
<div class="a" style="left:492px;top:264px;width:1px;height:17px;background:#e8e8e8"></div>
<div class="a" style="left:704px;top:264px;width:1px;height:17px;background:#e8e8e8"></div>
<div class="t" style="left:306px;top:267px;font-size:11px;color:#fff">10</div>
<div class="t" style="left:326px;top:267px;font-size:11px;color:#fff">25.09.2012</div>
<div class="t" style="left:396px;top:267px;font-size:11px;color:#fff">Выгружен</div>
<div class="a" style="left:289px;top:281px;width:14px;height:17px;background:#f0f0f0;border-top:1px solid #fff;border-left:1px solid #fff;border-bottom:1px solid #a0a0a0;border-right:1px solid #a0a0a0"></div>
<div class="a" style="left:303px;top:297px;width:401px;height:1px;background:#e8e8e8"></div>
<div class="a" style="left:322px;top:281px;width:1px;height:17px;background:#e8e8e8"></div>
<div class="a" style="left:392px;top:281px;width:1px;height:17px;background:#e8e8e8"></div>
<div class="a" style="left:492px;top:281px;width:1px;height:17px;background:#e8e8e8"></div>
<div class="a" style="left:704px;top:281px;width:1px;height:17px;background:#e8e8e8"></div>
<div class="t" style="left:306px;top:284px;font-size:11px;color:#000">9</div>
<div class="t" style="left:326px;top:284px;font-size:11px;color:#000">11.07.2012</div>
<div class="t" style="left:396px;top:284px;font-size:11px;color:#00008c;letter-spacing:0.3px">Готов к выгрузке</div>
<div class="a" style="left:289px;top:298px;width:14px;height:17px;background:#f0f0f0;border-top:1px solid #fff;border-left:1px solid #fff;border-bottom:1px solid #a0a0a0;border-right:1px solid #a0a0a0"></div>
<div class="a" style="left:303px;top:314px;width:401px;height:1px;background:#e8e8e8"></div>
<div class="a" style="left:322px;top:298px;width:1px;height:17px;background:#e8e8e8"></div>
<div class="a" style="left:392px;top:298px;width:1px;height:17px;background:#e8e8e8"></div>
<div class="a" style="left:492px;top:298px;width:1px;height:17px;background:#e8e8e8"></div>
<div class="a" style="left:704px;top:298px;width:1px;height:17px;background:#e8e8e8"></div>
<div class="t" style="left:306px;top:301px;font-size:11px;color:#000">8</div>
<div class="t" style="left:326px;top:301px;font-size:11px;color:#000">25.05.2012</div>
<div class="t" style="left:396px;top:301px;font-size:11px;color:#800000">Выгружен</div>
<div class="a" style="left:289px;top:315px;width:14px;height:17px;background:#f0f0f0;border-top:1px solid #fff;border-left:1px solid #fff;border-bottom:1px solid #a0a0a0;border-right:1px solid #a0a0a0"></div>
<div class="a" style="left:303px;top:331px;width:401px;height:1px;background:#e8e8e8"></div>
<div class="a" style="left:322px;top:315px;width:1px;height:17px;background:#e8e8e8"></div>
<div class="a" style="left:392px;top:315px;width:1px;height:17px;background:#e8e8e8"></div>
<div class="a" style="left:492px;top:315px;width:1px;height:17px;background:#e8e8e8"></div>
<div class="a" style="left:704px;top:315px;width:1px;height:17px;background:#e8e8e8"></div>
<div class="t" style="left:306px;top:318px;font-size:11px;color:#000">7</div>
<div class="t" style="left:326px;top:318px;font-size:11px;color:#000">25.05.2012</div>
<div class="t" style="left:396px;top:318px;font-size:11px;color:#800000">Выгружен</div>
<div class="a" style="left:289px;top:332px;width:14px;height:17px;background:#f0f0f0;border-top:1px solid #fff;border-left:1px solid #fff;border-bottom:1px solid #a0a0a0;border-right:1px solid #a0a0a0"></div>
<div class="a" style="left:303px;top:348px;width:401px;height:1px;background:#e8e8e8"></div>
<div class="a" style="left:322px;top:332px;width:1px;height:17px;background:#e8e8e8"></div>
<div class="a" style="left:392px;top:332px;width:1px;height:17px;background:#e8e8e8"></div>
<div class="a" style="left:492px;top:332px;width:1px;height:17px;background:#e8e8e8"></div>
<div class="a" style="left:704px;top:332px;width:1px;height:17px;background:#e8e8e8"></div>
<div class="t" style="left:306px;top:335px;font-size:11px;color:#000">6</div>
<div class="t" style="left:326px;top:335px;font-size:11px;color:#000">16.05.2012</div>
<div class="t" style="left:396px;top:335px;font-size:11px;color:#000">В работе</div>
<div class="a" style="left:289px;top:349px;width:14px;height:17px;background:#f0f0f0;border-top:1px solid #fff;border-left:1px solid #fff;border-bottom:1px solid #a0a0a0;border-right:1px solid #a0a0a0"></div>
<div class="a" style="left:303px;top:365px;width:401px;height:1px;background:#e8e8e8"></div>
<div class="a" style="left:322px;top:349px;width:1px;height:17px;background:#e8e8e8"></div>
<div class="a" style="left:392px;top:349px;width:1px;height:17px;background:#e8e8e8"></div>
<div class="a" style="left:492px;top:349px;width:1px;height:17px;background:#e8e8e8"></div>
<div class="a" style="left:704px;top:349px;width:1px;height:17px;background:#e8e8e8"></div>
<div class="t" style="left:306px;top:352px;font-size:11px;color:#000">5</div>
<div class="t" style="left:326px;top:352px;font-size:11px;color:#000">25.05.2012</div>
<div class="t" style="left:396px;top:352px;font-size:11px;color:#00008c;letter-spacing:0.3px">Готов к выгрузке</div>
<div class="a" style="left:289px;top:366px;width:14px;height:17px;background:#f0f0f0;border-top:1px solid #fff;border-left:1px solid #fff;border-bottom:1px solid #a0a0a0;border-right:1px solid #a0a0a0"></div>
<div class="a" style="left:303px;top:382px;width:401px;height:1px;background:#e8e8e8"></div>
<div class="a" style="left:322px;top:366px;width:1px;height:17px;background:#e8e8e8"></div>
<div class="a" style="left:392px;top:366px;width:1px;height:17px;background:#e8e8e8"></div>
<div class="a" style="left:492px;top:366px;width:1px;height:17px;background:#e8e8e8"></div>
<div class="a" style="left:704px;top:366px;width:1px;height:17px;background:#e8e8e8"></div>
<div class="t" style="left:306px;top:369px;font-size:11px;color:#000">4</div>
<div class="t" style="left:326px;top:369px;font-size:11px;color:#000">23.08.2012</div>
<div class="t" style="left:396px;top:369px;font-size:11px;color:#800000">Выгружен</div>
<div class="a" style="left:289px;top:383px;width:14px;height:17px;background:#f0f0f0;border-top:1px solid #fff;border-left:1px solid #fff;border-bottom:1px solid #a0a0a0;border-right:1px solid #a0a0a0"></div>
<div class="a" style="left:303px;top:399px;width:401px;height:1px;background:#e8e8e8"></div>
<div class="a" style="left:322px;top:383px;width:1px;height:17px;background:#e8e8e8"></div>
<div class="a" style="left:392px;top:383px;width:1px;height:17px;background:#e8e8e8"></div>
<div class="a" style="left:492px;top:383px;width:1px;height:17px;background:#e8e8e8"></div>
<div class="a" style="left:704px;top:383px;width:1px;height:17px;background:#e8e8e8"></div>
<div class="t" style="left:306px;top:386px;font-size:11px;color:#000">3</div>
<div class="t" style="left:326px;top:386px;font-size:11px;color:#000">23.08.2012</div>
<div class="t" style="left:396px;top:386px;font-size:11px;color:#00008c;letter-spacing:0.3px">Готов к выгрузке</div>
<div class="a" style="left:289px;top:400px;width:14px;height:17px;background:#f0f0f0;border-top:1px solid #fff;border-left:1px solid #fff;border-bottom:1px solid #a0a0a0;border-right:1px solid #a0a0a0"></div>
<div class="a" style="left:303px;top:416px;width:401px;height:1px;background:#e8e8e8"></div>
<div class="a" style="left:322px;top:400px;width:1px;height:17px;background:#e8e8e8"></div>
<div class="a" style="left:392px;top:400px;width:1px;height:17px;background:#e8e8e8"></div>
<div class="a" style="left:492px;top:400px;width:1px;height:17px;background:#e8e8e8"></div>
<div class="a" style="left:704px;top:400px;width:1px;height:17px;background:#e8e8e8"></div>
<div class="t" style="left:306px;top:403px;font-size:11px;color:#000">2</div>
<div class="t" style="left:326px;top:403px;font-size:11px;color:#000">11.07.2012</div>
<div class="t" style="left:396px;top:403px;font-size:11px;color:#800000">Выгружен</div>
<div class="a" style="left:289px;top:417px;width:14px;height:17px;background:#f0f0f0;border-top:1px solid #fff;border-left:1px solid #fff;border-bottom:1px solid #a0a0a0;border-right:1px solid #a0a0a0"></div>
<div class="a" style="left:303px;top:433px;width:401px;height:1px;background:#e8e8e8"></div>
<div class="a" style="left:322px;top:417px;width:1px;height:17px;background:#e8e8e8"></div>
<div class="a" style="left:392px;top:417px;width:1px;height:17px;background:#e8e8e8"></div>
<div class="a" style="left:492px;top:417px;width:1px;height:17px;background:#e8e8e8"></div>
<div class="a" style="left:704px;top:417px;width:1px;height:17px;background:#e8e8e8"></div>
<div class="t" style="left:306px;top:420px;font-size:11px;color:#000">1</div>
<div class="t" style="left:326px;top:420px;font-size:11px;color:#000">11.07.2012</div>
<div class="t" style="left:396px;top:420px;font-size:11px;color:#800000">Выгружен</div>
<div class="a" style="left:716px;top:247px;width:272px;height:465px;border:1px solid #a0a0a0;background:#e8e8e8"></div>
<div class="a" style="left:968px;top:267px;width:17px;height:425px;background-color:#f4f4f4;background-image:repeating-conic-gradient(#e6e6e6 0 25%,#fafafa 0 50%);background-size:2px 2px"></div>
<div class="a" style="left:968px;top:250px;width:17px;height:17px;background:#f0f0f0;border-top:1px solid #fff;border-left:1px solid #fff;border-right:1px solid #a0a0a0;border-bottom:1px solid #a0a0a0"></div>
<svg class="a" style="left:972px;top:256px" width="9" height="5" viewBox="0 0 9 5"><path d="M0 5L4.5 0L9 5Z" fill="#a8a8a8"/></svg>
<div class="a" style="left:968px;top:692px;width:17px;height:17px;background:#f0f0f0;border-top:1px solid #fff;border-left:1px solid #fff;border-right:1px solid #a0a0a0;border-bottom:1px solid #a0a0a0"></div>
<svg class="a" style="left:972px;top:698px" width="9" height="5" viewBox="0 0 9 5"><path d="M0 0L9 0L4.5 5Z" fill="#a8a8a8"/></svg>
<div class="t" style="left:729px;top:267px;font-size:14.5px;letter-spacing:0.4px;font-weight:bold;color:#8b0000;text-decoration:underline;font-family:Liberation Serif,serif">Статус</div>
<div class="a" style="left:735px;top:285px;width:89px;height:20px;background:#808080"></div>
<div class="t" style="left:738px;top:291px;font-size:12px;color:#fff">Наименование</div>
<div class="a" style="left:825px;top:304px;width:126px;height:1px;background:#a0a0a0"></div>
<div class="t" style="left:835px;top:291px;font-size:12px;letter-spacing:0.15px">Выгружен</div>
<div class="a" style="left:735px;top:306px;width:89px;height:20px;background:#808080"></div>
<div class="t" style="left:738px;top:312px;font-size:12px;color:#fff">Дата</div>
<div class="a" style="left:825px;top:325px;width:126px;height:1px;background:#a0a0a0"></div>
<div class="t" style="left:835px;top:312px;font-size:12px;letter-spacing:0.15px">2012-09-25</div>
<div class="t" style="left:729px;top:348px;font-size:14.5px;letter-spacing:0.85px;font-weight:bold;color:#8b0000;text-decoration:underline;font-family:Liberation Serif,serif">Примечание</div>
<div class="a" style="left:735px;top:366px;width:216px;height:18px;background:#e0e0e0;border:1px solid #e4e4e4"></div>
<div class="a" style="left:735px;top:366px;width:216px;height:18px;background:#e8e8e8;border:1px solid #dcdcdc;border-left:4px solid #c8c8c8"></div>
<div class="t" style="left:740px;top:370px;font-size:12px">- нет -</div>
<div class="a" style="left:716px;top:718px;width:272px;height:50px;border:1px solid #a0a0a0;background:#f0f0f0"></div>
<div class="t" style="left:725px;top:725px;font-size:11px;color:#10109a;text-decoration:underline;-webkit-text-stroke-width:0">Открыть папку с XML</div>
<div class="a" style="left:285px;top:774px;width:709px;height:30px;border:1px solid #a0a0a0"></div>
<div class="a" style="left:836px;top:778px;width:75px;height:22px;background:#f0f0f0;border:1px solid #000;box-shadow:inset 1px 1px 0 #fff,inset -1px -1px 0 #a0a0a0"></div>
<div class="t" style="left:864px;top:783px;font-size:12px;-webkit-text-stroke-width:0.05px">OK</div>
<div class="a" style="left:915px;top:778px;width:76px;height:22px;background:#f0f0f0;border-top:1px solid #fff;border-left:1px solid #fff;border-right:1px solid #6a6a6a;border-bottom:1px solid #6a6a6a;box-shadow:inset -1px -1px 0 #a0a0a0"></div>
<div class="t" style="left:931px;top:783px;font-size:11.5px;-webkit-text-stroke-width:0.05px">Отмена</div>
</body></html>
